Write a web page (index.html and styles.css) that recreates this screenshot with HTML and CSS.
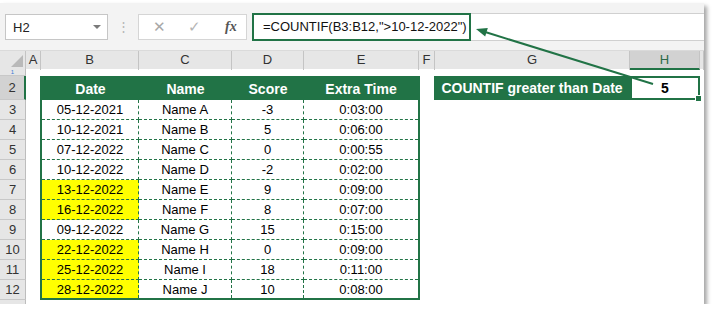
FILE: index.html
```html
<!DOCTYPE html>
<html lang="en">
<head>
    <meta charset="UTF-8">
    <title>COUNTIF greater than Date</title>
    <link rel="stylesheet" href="styles.css">
</head>
<body>
    <div class="window">
        <div class="toolbar">
            <div class="namebox">
                <span>H2</span>
                <span class="caret"></span>
            </div>
            <div class="grip">⋮</div>
            <div class="fxbox">
                <span class="cancel">✕</span>
                <span class="enter">✓</span>
                <span class="fx">fx</span>
            </div>
            <div class="formula">
                <span class="formula-text">=COUNTIF(B3:B12,"&gt;10-12-2022")</span>
            </div>
        </div>

        <div class="colheads">
            <div class="corner">
                <svg width="26" height="19" viewBox="0 0 26 19"><polygon points="11,16 23,16 23,4" fill="#b9b9b9"/></svg>
            </div>
            <div class="ch">A</div>
            <div class="ch">B</div>
            <div class="ch">C</div>
            <div class="ch">D</div>
            <div class="ch">E</div>
            <div class="ch">F</div>
            <div class="ch">G</div>
            <div class="ch active">H</div>
            <div class="ch"></div>
        </div>

        <div class="sheet">
            <div class="rowheads">
                <div class="rh r1">1</div>
                <div class="rh r2 active">2</div>
                <div class="rh">3</div>
                <div class="rh">4</div>
                <div class="rh">5</div>
                <div class="rh">6</div>
                <div class="rh">7</div>
                <div class="rh">8</div>
                <div class="rh">9</div>
                <div class="rh">10</div>
                <div class="rh">11</div>
                <div class="rh">12</div>
                <div class="rh rest"></div>
            </div>

            <div class="cells">
                <table class="data">
                    <colgroup>
                        <col class="c-date">
                        <col class="c-name">
                        <col class="c-score">
                        <col class="c-time">
                    </colgroup>
                    <tr class="head">
                        <th>Date</th>
                        <th>Name</th>
                        <th>Score</th>
                        <th>Extra Time</th>
                    </tr>
                    <tr><td>05-12-2021</td><td>Name A</td><td>-3</td><td>0:03:00</td></tr>
                    <tr><td>10-12-2021</td><td>Name B</td><td>5</td><td>0:06:00</td></tr>
                    <tr><td>07-12-2022</td><td>Name C</td><td>0</td><td>0:00:55</td></tr>
                    <tr><td>10-12-2022</td><td>Name D</td><td>-2</td><td>0:02:00</td></tr>
                    <tr><td class="hit">13-12-2022</td><td>Name E</td><td>9</td><td>0:09:00</td></tr>
                    <tr><td class="hit">16-12-2022</td><td>Name F</td><td>8</td><td>0:07:00</td></tr>
                    <tr><td>09-12-2022</td><td>Name G</td><td>15</td><td>0:15:00</td></tr>
                    <tr><td class="hit">22-12-2022</td><td>Name H</td><td>0</td><td>0:09:00</td></tr>
                    <tr><td class="hit">25-12-2022</td><td>Name I</td><td>18</td><td>0:11:00</td></tr>
                    <tr class="last"><td class="hit">28-12-2022</td><td>Name J</td><td>10</td><td>0:08:00</td></tr>
                </table>

                <div class="lookup">
                    <div class="lookup-label">COUNTIF greater than Date</div>
                    <div class="lookup-value">5</div>
                </div>
            </div>
        </div>

        <svg class="arrow" width="704" height="301" viewBox="0 0 704 301">
            <line x1="653" y1="81" x2="486" y2="29.3" stroke="#217346" stroke-width="2"/>
            <polygon points="476,26 487.8,25 485.2,33.6" fill="#217346"/>
        </svg>
    </div>
</body>
</html>
```

FILE: styles.css
```css
body {
    margin: 0;
    background: #ffffff;
    font-family: "Liberation Sans", Arial, sans-serif;
}

.window {
    position: relative;
    width: 704px;
    height: 301px;
    margin-top: 3px;
    background: #ffffff;
    box-shadow: 3px 3px 4px rgba(0, 0, 0, 0.35);
    overflow: hidden;
}

/* formula bar */

.toolbar {
    height: 47px;
    box-sizing: border-box;
    padding: 10px 0 0 5px;
    background: #f3f3f3;
    display: flex;
    align-items: flex-start;
}

.namebox {
    width: 103px;
    height: 26px;
    margin-top: 1px;
    box-sizing: border-box;
    padding: 0 6px 0 7px;
    background: #ffffff;
    border: 1px solid #c6c6c6;
    display: flex;
    align-items: center;
    justify-content: space-between;
    font-size: 13px;
    color: #222222;
}

.caret {
    width: 0;
    height: 0;
    border-left: 4px solid transparent;
    border-right: 4px solid transparent;
    border-top: 4px solid #7a7a7a;
}

.grip {
    width: 30px;
    height: 28px;
    line-height: 28px;
    text-align: center;
    color: #b5b5b5;
    font-size: 13px;
}

.fxbox {
    width: 109px;
    height: 26px;
    margin-top: 1px;
    box-sizing: border-box;
    background: #ffffff;
    border: 1px solid #d5d5d5;
    display: flex;
    align-items: center;
    font-size: 15px;
}

.cancel {
    margin-left: 14px;
    color: #a8a8a8;
}

.enter {
    margin-left: 22px;
    color: #b5b5b5;
}

.fx {
    margin-left: 24px;
    font-family: "Liberation Serif", serif;
    font-style: italic;
    font-weight: bold;
    font-size: 14px;
    color: #555555;
}

.formula {
    flex: 1;
    height: 28px;
    margin-left: 5px;
    box-sizing: border-box;
    background: #ffffff;
    border-top: 1px solid #d0d0d0;
    border-bottom: 1px solid #d0d0d0;
    display: flex;
}

.formula-text {
    width: 219px;
    height: 28px;
    margin-top: -1px;
    box-sizing: border-box;
    padding-left: 9px;
    border: 2px solid #217346;
    font-size: 13px;
    line-height: 24px;
    color: #111111;
}

/* headers */

.colheads {
    display: grid;
    grid-template-columns: 26px 15px 98px 93px 72px 115px 16px 195px 70px 1fr;
    height: 19px;
    background: #e6e6e6;
    border-top: 1px solid #dadada;
    box-sizing: border-box;
    font-size: 13px;
    color: #333333;
}

.ch {
    border-right: 1px solid #c4c4c4;
    text-align: center;
    line-height: 18px;
}

.ch.active {
    background: #d2d2d2;
    border-bottom: 2px solid #217346;
    color: #2d6a4a;
    line-height: 17px;
}

.corner {
    border-right: 1px solid #c4c4c4;
    box-sizing: border-box;
}

.corner svg {
    display: block;
}

.sheet {
    display: flex;
}

.rowheads {
    width: 26px;
    display: flex;
    flex-direction: column;
    font-size: 13px;
    color: #333333;
}

.rh {
    height: 20px;
    box-sizing: border-box;
    background: #e6e6e6;
    border-right: 1px solid #bdbdbd;
    border-bottom: 1px solid #c8c8c8;
    text-align: center;
    line-height: 19px;
    overflow: hidden;
}

.rh.r1 {
    height: 7px;
    font-size: 6px;
    line-height: 6px;
    color: #3a7bd5;
}

.rh.r2 {
    height: 24px;
    line-height: 23px;
}

.rh.active {
    background: #d2d2d2;
    border-right: 2px solid #217346;
}

.rh.rest {
    height: 10px;
    border-bottom: none;
}

/* sheet cells */

.cells {
    flex: 1;
    display: flex;
    align-items: flex-start;
    padding-top: 7px;
}

.data {
    margin-left: 14px;
    width: 380px;
    table-layout: fixed;
    border-collapse: separate;
    border-spacing: 0;
    border: 2px solid #217346;
    font-size: 13px;
    color: #000000;
}

.c-date { width: 97px; }
.c-name { width: 93px; }
.c-score { width: 72px; }
.c-time { width: 114px; }

.data th {
    height: 22px;
    padding: 0;
    background: #217346;
    color: #ffffff;
    font-size: 14px;
    font-weight: bold;
}

.data td {
    height: 20px;
    padding: 0;
    box-sizing: border-box;
    text-align: center;
    border-right: 1px dashed #217346;
    border-bottom: 1px dashed #217346;
}

.data td:last-child {
    border-right: none;
}

.data tr.last td {
    height: 18px;
    border-bottom: none;
}

.data td.hit {
    background: #ffff00;
}

.lookup {
    display: flex;
    margin-left: 14px;
    height: 24px;
}

.lookup-label {
    width: 196px;
    background: #217346;
    color: #ffffff;
    font-size: 14px;
    font-weight: bold;
    line-height: 24px;
    text-align: center;
}

.lookup-value {
    position: relative;
    width: 70px;
    box-sizing: border-box;
    border: 2px solid #217346;
    background: #ffffff;
    font-size: 14px;
    font-weight: bold;
    line-height: 20px;
    text-align: center;
}

.lookup-value::after {
    content: "";
    position: absolute;
    right: -4px;
    bottom: -4px;
    width: 5px;
    height: 5px;
    background: #217346;
    border: 1px solid #ffffff;
}

.arrow {
    position: absolute;
    top: 0;
    left: 0;
    pointer-events: none;
}
```
